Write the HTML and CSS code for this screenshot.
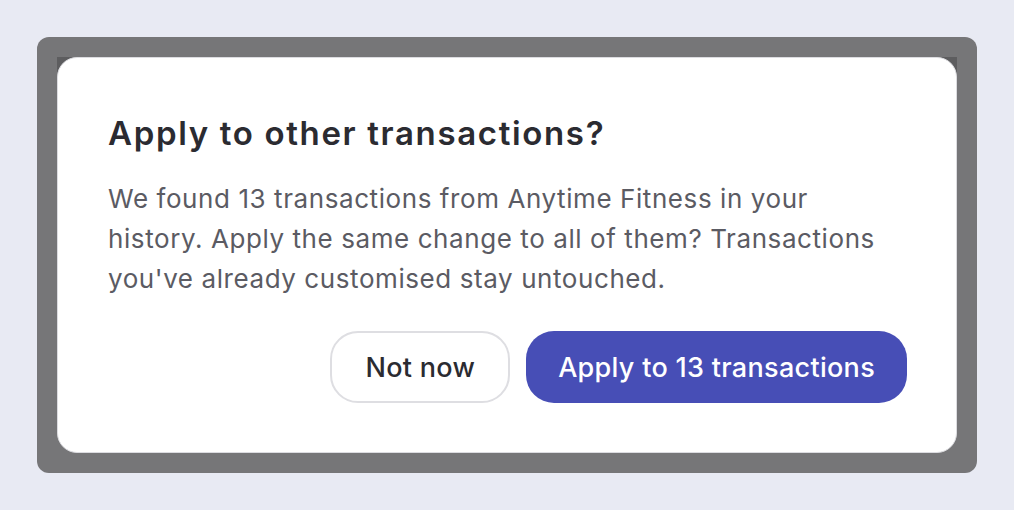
FILE: index.html
```html
<!DOCTYPE html>
<html lang="en">
<head>
<meta charset="utf-8">
<title>Apply to other transactions?</title>
<link rel="stylesheet" href="styles.css">
</head>
<body>
<div class="backdrop">
  <div class="frame">
    <div class="dialog" role="dialog" aria-labelledby="dlg-title">
      <h2 id="dlg-title" class="title">Apply to other transactions?</h2>
      <p class="text">We found 13 transactions from Anytime Fitness in your<br>history. Apply the same change to all of them? Transactions<br>you've already customised stay untouched.</p>
      <div class="actions">
        <button class="btn btn-secondary" type="button">Not now</button>
        <button class="btn btn-primary" type="button">Apply to 13 transactions</button>
      </div>
    </div>
  </div>
</div>
</body>
</html>
```

FILE: styles.css
```css
* { box-sizing: border-box; }

html, body {
  margin: 0;
  padding: 0;
}

body {
  background: #e8eaf3;
  font-family: "Inter", "Noto Sans", sans-serif;
  width: 1014px;
  height: 510px;
  overflow: hidden;
}

.backdrop {
  margin: 37px;
  width: 940px;
  height: 436px;
  padding: 20px;
  background: #767678;
  border-radius: 12px;
}

.frame {
  width: 900px;
  height: 396px;
  background: linear-gradient(#5d5d5f 0 22px, transparent 22px);
}

.dialog {
  width: 900px;
  height: 396px;
  background: #ffffff;
  border: 1px solid #dcdce0;
  border-radius: 20px;
  padding: 55px 49px 49px 50px;
  display: flex;
  flex-direction: column;
}

.title {
  margin: 0;
  font-size: 33px;
  line-height: 40px;
  font-weight: 600;
  color: #2b2b31;
  letter-spacing: 1.65px;
}

.text {
  margin: 26px 0 0;
  font-size: 26px;
  line-height: 40px;
  font-weight: 400;
  color: #5b5b63;
  letter-spacing: 0.58px;
  white-space: nowrap;
}

.actions {
  margin-top: auto;
  display: flex;
  justify-content: flex-end;
  gap: 16px;
}

.btn {
  height: 72px;
  border-radius: 28px;
  font-family: inherit;
  font-size: 27px;
  font-weight: 500;
  letter-spacing: 0.3px;
  cursor: pointer;
}

.btn-secondary {
  background: #ffffff;
  border: 2px solid #dedee2;
  color: #2b2b31;
  padding: 0 33px;
}

.btn-primary {
  background: #474eb6;
  border: none;
  color: #ffffff;
  padding: 0 32px;
}
```
